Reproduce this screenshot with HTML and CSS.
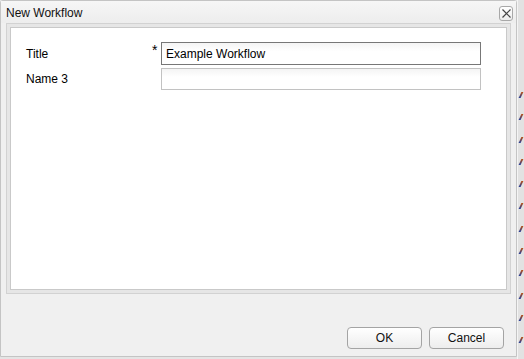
FILE: index.html
```html
<!DOCTYPE html>
<html lang="en">
<head>
  <meta charset="UTF-8" />
  <title>New Workflow</title>
  <link rel="stylesheet" href="styles.css">
</head>
<body>
  <div class="screen">
    <div class="dialog">
      <div class="dialog-header">
        <span class="dialog-title">New Workflow</span>
        <button class="close-btn" aria-label="Close">
          <svg width="9" height="9" viewBox="0 0 9 9">
            <path d="M0.5 0.5 L8.5 8.5 M8.5 0.5 L0.5 8.5" stroke="#444" stroke-width="1.2" fill="none"/>
          </svg>
        </button>
      </div>

      <div class="dialog-body">
        <form class="form-panel" onsubmit="return false;">
          <div class="form-row">
            <label for="title">Title</label>
            <span class="required">*</span>
            <input type="text" id="title" class="field field-active" value="Example Workflow">
          </div>
          <div class="form-row">
            <label for="name">Name 3</label>
            <span class="required"></span>
            <input type="text" id="name" class="field">
          </div>
        </form>
      </div>

      <div class="dialog-footer">
        <button class="btn">OK</button>
        <button class="btn">Cancel</button>
      </div>
    </div>

    <!-- the page behind the dialog -->
    <div class="backdrop">
      <div class="backdrop-top"></div>
      <div class="backdrop-list">
        <div class="backdrop-row"><i></i></div>
        <div class="backdrop-row"><i></i></div>
        <div class="backdrop-row"><i></i></div>
        <div class="backdrop-row"><i></i></div>
        <div class="backdrop-row"><i></i></div>
        <div class="backdrop-row"><i></i></div>
        <div class="backdrop-row"><i></i></div>
        <div class="backdrop-row"><i></i></div>
        <div class="backdrop-row"><i></i></div>
        <div class="backdrop-row"><i></i></div>
        <div class="backdrop-row"><i></i></div>
        <div class="backdrop-row"><i></i></div>
        <div class="backdrop-row"><i></i></div>
      </div>
    </div>
  </div>
</body>
</html>
```

FILE: styles.css
```css
body {
  margin: 0;
  padding: 0;
  font-family: 'Liberation Sans', Arial, sans-serif;
  font-size: 12px;
  color: #000;
  background-color: #e4e4e4;
  overflow: hidden;
}
.screen {
  display: flex;
  width: 524px;
  height: 359px;
}
.dialog {
  width: 517px;
  height: 357px;
  box-sizing: border-box;
  border: 1px solid #c4c4c4;
  border-radius: 3px 3px 0 0;
  background-color: #f0f0f0;
  display: flex;
  flex-direction: column;
  flex-shrink: 0;
}
.dialog-header {
  height: 22px;
  display: flex;
  align-items: center;
  justify-content: space-between;
  padding: 0 3px 0 5px;
  background: linear-gradient(#f6f6f6, #ededed);
}
.dialog-title {
  font-size: 12px;
  color: #111;
  padding-top: 1px;
}
.close-btn {
  width: 14px;
  height: 15px;
  padding: 0;
  margin-top: 2px;
  border: 1px solid #a8a8a8;
  border-radius: 3px;
  background: linear-gradient(#ffffff, #ececec);
  display: flex;
  align-items: center;
  justify-content: center;
}
.dialog-body {
  flex: 1;
  margin: 0 5px;
  border: 1px solid #d2d2d2;
  padding: 3px;
  background-color: #e6e6e6;
  display: flex;
}
.form-panel {
  flex: 1;
  margin: 0;
  background-color: #fff;
  border: 1px solid #c9c9c9;
  padding: 14px 0 0 15px;
  display: flex;
  flex-direction: column;
  gap: 3px;
}
.form-row {
  display: flex;
  align-items: center;
}
.form-row label {
  width: 126px;
}
.required {
  width: 9px;
  align-self: flex-start;
  font-size: 14px;
  line-height: 12px;
  margin-top: 2px;
}
.field {
  width: 320px;
  height: 22px;
  box-sizing: border-box;
  border: 1px solid #c2c2c2;
  background: linear-gradient(#f4f4f4, #ffffff 40%);
  font-family: 'Liberation Sans', Arial, sans-serif;
  font-size: 12px;
  padding: 1px 4px 0;
  margin: 0;
  outline: none;
}
.field-active {
  height: 23px;
  border-color: #777;
}
.dialog-footer {
  height: 62px;
  display: flex;
  justify-content: flex-end;
  align-items: flex-end;
  gap: 7px;
  padding: 0 12px 7px 0;
  box-sizing: border-box;
}
.btn {
  width: 75px;
  height: 22px;
  border: 1px solid #a4a4a4;
  border-radius: 4px;
  background: linear-gradient(#ffffff, #ededed);
  font-family: 'Liberation Sans', Arial, sans-serif;
  font-size: 12px;
  color: #111;
  padding: 0;
}
.backdrop {
  flex: 1;
  display: flex;
  flex-direction: column;
  background-color: #e2e2e2;
  border-left: 1px solid #f4f4f4;
}
.backdrop-top {
  height: 12px;
  background-color: #8cb92a;
}
.backdrop-list {
  padding-top: 82px;
}
.backdrop-row {
  height: 22.3px;
  position: relative;
}
.backdrop-row i {
  position: absolute;
  left: 2px;
  top: 10px;
  width: 2px;
  height: 6px;
  background: linear-gradient(#c05010, #2040a0);
  transform: skewX(-25deg);
}
```
